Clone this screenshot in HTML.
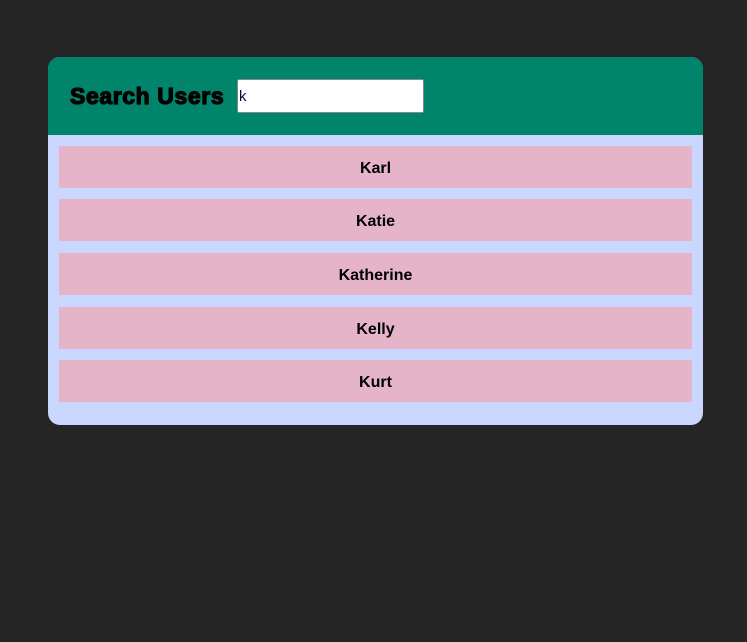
<!DOCTYPE html>
<html><head><style>
body{margin:0;background:#252525;width:747px;height:642px;overflow:hidden;font-family:"Liberation Sans",sans-serif}
.card{position:absolute;left:48px;top:57px;width:655px;height:368px;background:#c9d6fd;border-radius:12px;overflow:hidden}
.hdr{height:78px;background:#00846b;position:relative}
.hdr h1{position:absolute;left:22px;top:26px;margin:0;font-size:23px;font-weight:900;color:#000;letter-spacing:0.6px;-webkit-text-stroke:1.2px #000;white-space:nowrap}
.hdr .in{position:absolute;left:189px;top:22px;width:187px;height:34px;background:#fff;border:1px solid #888;border-radius:2px;box-sizing:border-box;font-size:15px;line-height:34px;padding-left:1px;color:#203}
.item{position:absolute;left:11px;width:633px;height:42px;background:#e5b4c8;text-align:center;line-height:46px;font-size:16px;font-weight:bold;color:#000}
</style></head><body>
<div class="card">
<div class="hdr"><h1>Search Users</h1><div class="in">k</div></div>
<div class="item" style="top:89px">Karl</div>
<div class="item" style="top:142px">Katie</div>
<div class="item" style="top:196px">Katherine</div>
<div class="item" style="top:250px">Kelly</div>
<div class="item" style="top:303px">Kurt</div>
</div>
</body></html>
